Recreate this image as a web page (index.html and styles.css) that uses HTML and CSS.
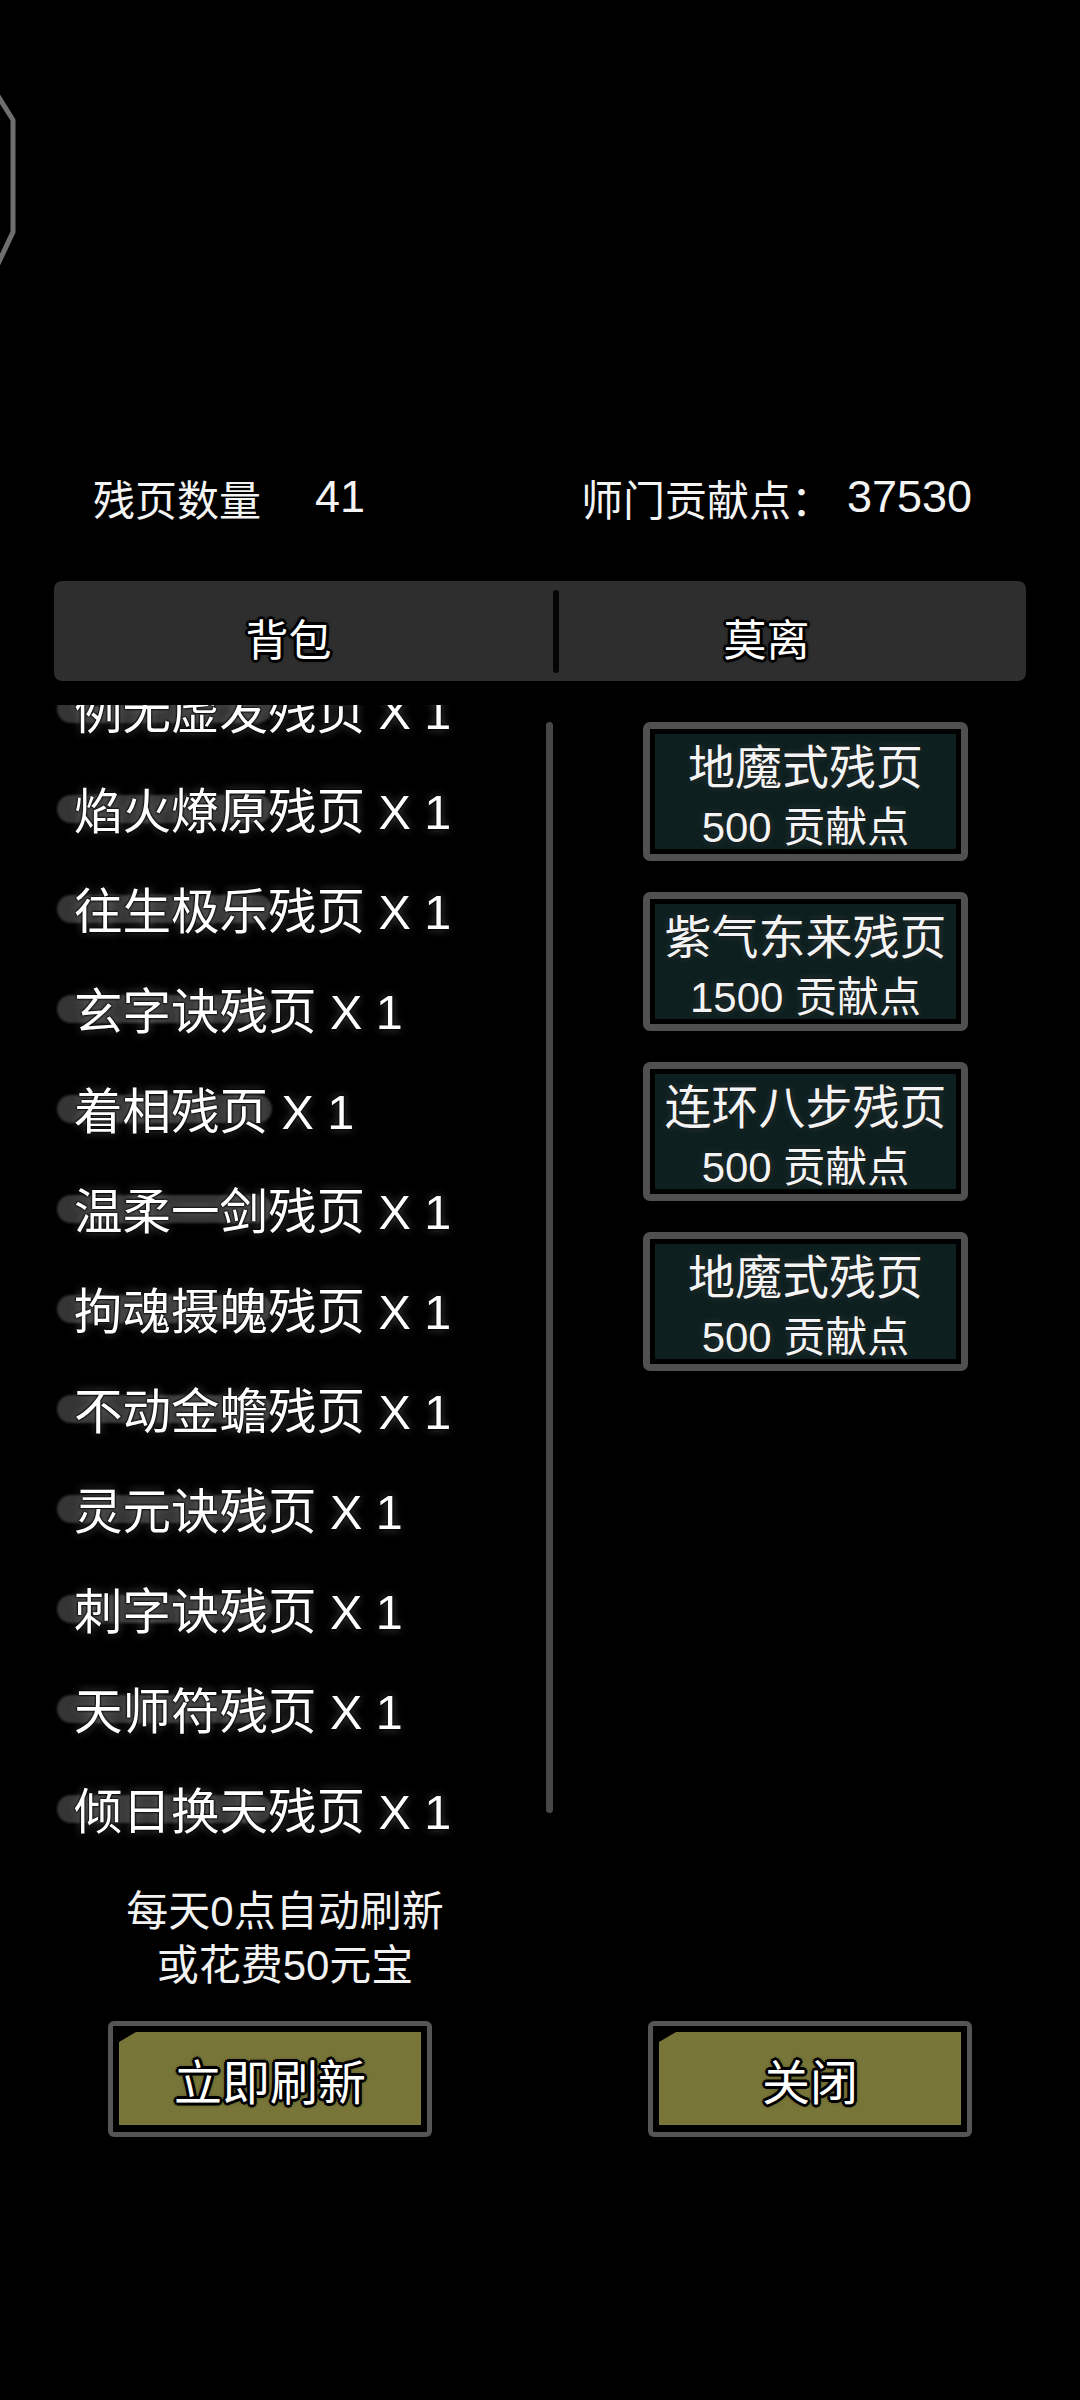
FILE: index.html
```html
<!DOCTYPE html>
<html lang="zh-CN">
<head>
<meta charset="utf-8">
<title>残页兑换</title>
<link rel="stylesheet" href="styles.css">
</head>
<body>
<div class="screen">
  <div class="top">
    <svg class="frame" width="20" height="176" viewBox="0 0 20 176">
      <polyline points="-2,4 13,28 13,140 -2,172" fill="none" stroke="#6e6e6e" stroke-width="5" stroke-linejoin="round"/>
    </svg>
  </div>

  <div class="stats">
    <div class="stat stat-left"><span>残页数量</span><span class="num gap-num">41</span></div>
    <div class="stat"><span>师门贡献点：</span><span class="num gap-num2">37530</span></div>
  </div>

  <div class="tabs">
    <div class="tab tab-left">背包</div>
    <div class="tab-divider"></div>
    <div class="tab tab-right">莫离</div>
  </div>

  <div class="main">
    <div class="left">
      <div class="list-wrap">
        <div class="list">
          <div class="item"><span class="blob"></span><span class="label">例无虚发残页 X 1</span></div>
          <div class="item"><span class="blob"></span><span class="label">焰火燎原残页 X 1</span></div>
          <div class="item"><span class="blob"></span><span class="label">往生极乐残页 X 1</span></div>
          <div class="item"><span class="blob"></span><span class="label">玄字诀残页 X 1</span></div>
          <div class="item"><span class="blob"></span><span class="label">着相残页 X 1</span></div>
          <div class="item"><span class="blob"></span><span class="label">温柔一剑残页 X 1</span></div>
          <div class="item"><span class="blob"></span><span class="label">拘魂摄魄残页 X 1</span></div>
          <div class="item"><span class="blob"></span><span class="label">不动金蟾残页 X 1</span></div>
          <div class="item"><span class="blob"></span><span class="label">灵元诀残页 X 1</span></div>
          <div class="item"><span class="blob"></span><span class="label">刺字诀残页 X 1</span></div>
          <div class="item"><span class="blob"></span><span class="label">天师符残页 X 1</span></div>
          <div class="item"><span class="blob"></span><span class="label">倾日换天残页 X 1</span></div>
        </div>
        <div class="scrollbar"></div>
      </div>
      <div class="note">每天0点自动刷新<br>或花费50元宝</div>
    </div>

    <div class="right">
      <div class="card"><div class="card-inner"><div class="card-title">地魔式残页</div><div class="card-cost">500 贡献点</div></div></div>
      <div class="card"><div class="card-inner"><div class="card-title">紫气东来残页</div><div class="card-cost">1500 贡献点</div></div></div>
      <div class="card"><div class="card-inner"><div class="card-title">连环八步残页</div><div class="card-cost">500 贡献点</div></div></div>
      <div class="card"><div class="card-inner"><div class="card-title">地魔式残页</div><div class="card-cost">500 贡献点</div></div></div>
    </div>
  </div>

  <div class="buttons">
    <div class="btn"><div class="btn-inner">立即刷新</div></div>
    <div class="btn"><div class="btn-inner">关闭</div></div>
  </div>
</div>
</body>
</html>
```

FILE: styles.css
```css
* { box-sizing: border-box; }

html, body {
  margin: 0;
  padding: 0;
  background: #000;
}

body {
  width: 1080px;
  height: 2400px;
  overflow: hidden;
  color: #f4f4f4;
  font-family: "Liberation Sans", "Noto Sans CJK SC", sans-serif;
}

.screen {
  width: 1080px;
  height: 2400px;
}

.top {
  height: 455px;
  padding-top: 92px;
}

.frame { display: block; }

.stats {
  height: 84px;
  display: flex;
  align-items: center;
  padding-left: 93px;
  font-size: 42px;
}

.stat { display: flex; align-items: center; white-space: nowrap; }
.stat-left { width: 488px; }
.num { font-size: 45px; }
.gap-num { margin-left: 54px; }
.gap-num2 { margin-left: 14px; }

.tabs {
  margin: 42px 54px 0;
  height: 100px;
  background: #2e2e2e;
  border-radius: 8px;
  display: flex;
  align-items: stretch;
}

.tab {
  display: flex;
  align-items: center;
  justify-content: center;
  padding-top: 12px;
  font-size: 43px;
  color: #fff;
  text-shadow: 3px 0 #000, -3px 0 #000, 0 3px #000, 0 -3px #000,
               2px 2px #000, -2px 2px #000, 2px -2px #000, -2px -2px #000, 0 0 5px #000;
}

.tab-left { width: 499px; padding-right: 30px; }
.tab-right { flex: 1; padding-right: 52px; }

.tab-divider {
  width: 6px;
  margin: 9px 0 8px;
  background: #050505;
  border-radius: 3px;
}

.main {
  margin-top: 24px;
  display: flex;
}

.left { width: 570px; }

.list-wrap {
  position: relative;
  height: 1153px;
  overflow: hidden;
}

.list { margin-top: -47px; }

.item {
  position: relative;
  height: 100px;
  display: flex;
  align-items: center;
  padding-left: 74px;
}

.blob {
  position: absolute;
  left: 57px;
  top: 37px;
  width: 215px;
  height: 28px;
  border-radius: 14px;
  background: #353535;
  filter: blur(1px);
}

.label {
  position: relative;
  font-size: 48.5px;
  color: #fff;
  white-space: nowrap;
  text-shadow: 0 0 2px #000, 0 0 2px #000, 0 0 3px #000, 0 0 9px rgba(170,170,170,0.55);
}

.scrollbar {
  position: absolute;
  left: 546px;
  top: 17px;
  width: 7px;
  height: 1091px;
  border-radius: 4px;
  background: #474747;
}

.note {
  margin-top: 27px;
  text-align: center;
  font-size: 42px;
  line-height: 54px;
  color: #f2f2f2;
}

.right {
  flex: 1;
  padding-top: 17px;
  padding-left: 73px;
  display: flex;
  flex-direction: column;
  gap: 31px;
}

.card {
  width: 325px;
  height: 139px;
  border: 7px solid #505050;
  border-radius: 7px;
  background: #000;
  padding: 5px;
}

.card-inner {
  height: 100%;
  background: #0e1f1f;
  display: flex;
  flex-direction: column;
  align-items: center;
  padding-top: 4px;
  text-shadow: 0 0 3px rgba(0,0,0,0.9), 0 0 6px rgba(150,150,150,0.35);
}

.card-title { font-size: 47px; line-height: 60px; white-space: nowrap; }
.card-cost { font-size: 42px; line-height: 60px; white-space: nowrap; }

.buttons {
  margin-top: 28px;
  display: flex;
}

.btn {
  width: 324px;
  height: 116px;
  margin-left: 108px;
  border: 5px solid #555;
  border-radius: 6px;
  background: #000;
  padding: 6px 6px 7px;
}

.btn + .btn { margin-left: 216px; }

.btn-inner {
  height: 100%;
  background: #777538;
  clip-path: polygon(0 10px, 17px 0, 100% 0, 100% 100%, 0 100%);
  display: flex;
  align-items: center;
  justify-content: center;
  font-size: 48px;
  color: #fff;
  text-shadow: 3px 0 #000, -3px 0 #000, 0 3px #000, 0 -3px #000,
               2px 2px #000, -2px 2px #000, 2px -2px #000, -2px -2px #000, 0 0 5px #000;
}
```
